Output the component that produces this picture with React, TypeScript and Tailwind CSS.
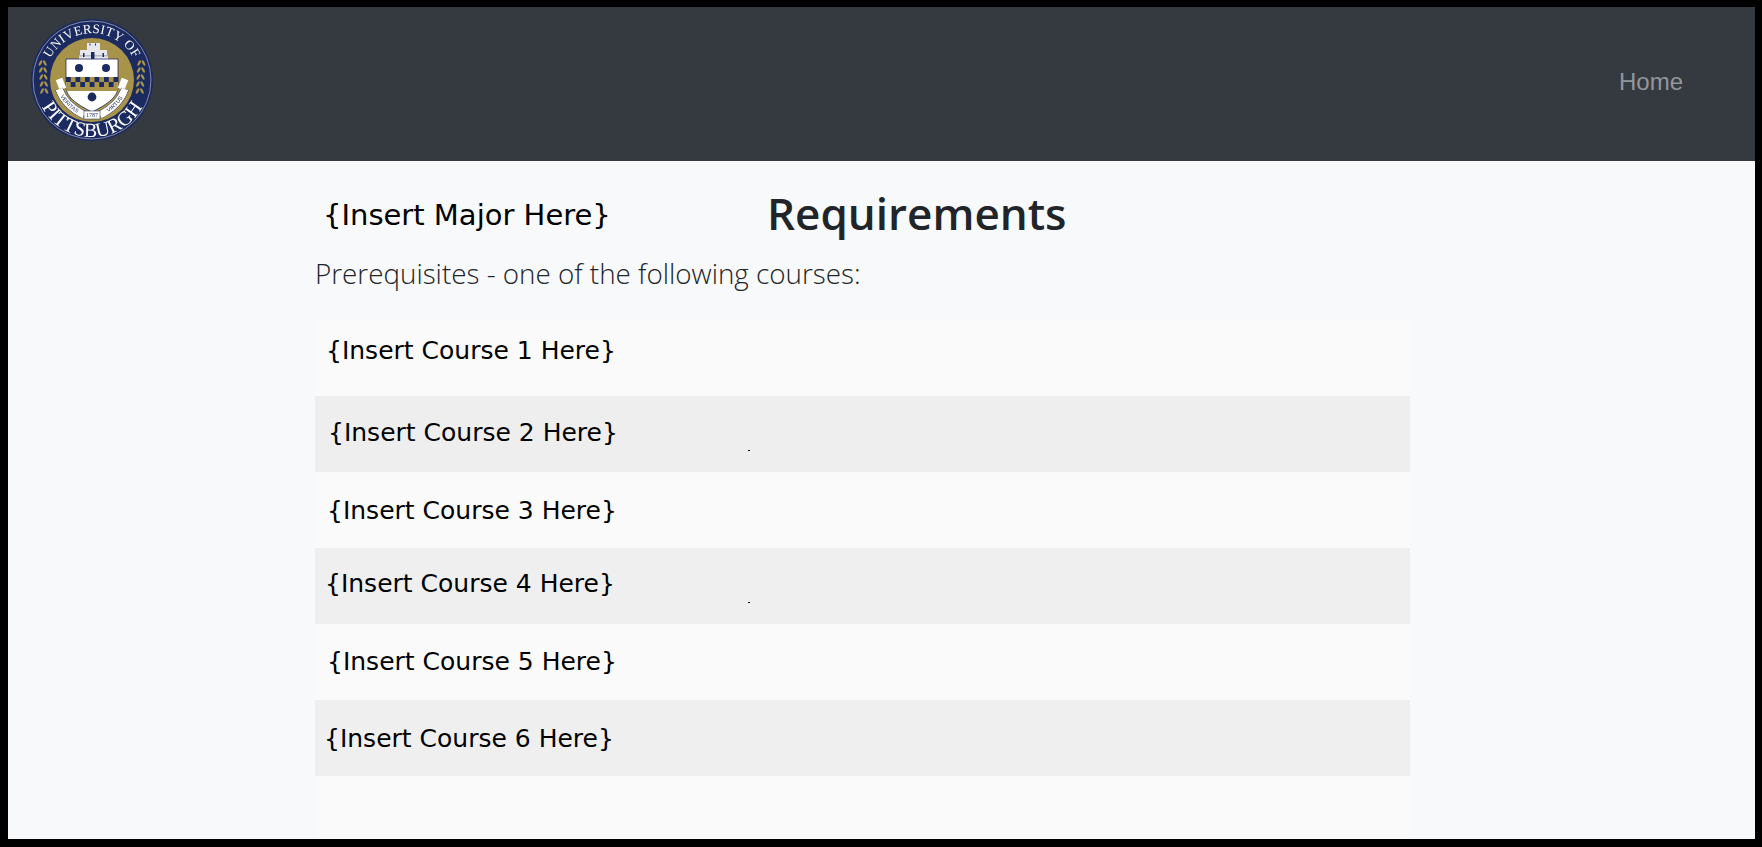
const rows = [
  { label: "{Insert Course 1 Here}", cls: "h-[76px] pl-[11px] pb-[14px] flex items-center" },
  { label: "{Insert Course 2 Here}", cls: "h-[76px] pl-[13px] pb-[2px] flex items-center bg-[#eeeeee] relative", dot: true },
  { label: "{Insert Course 3 Here}", cls: "h-[76px] pl-[12px] pt-[2px] flex items-center" },
  { label: "{Insert Course 4 Here}", cls: "h-[76px] pl-[10px] pb-[4px] flex items-center bg-[#efefef] relative", dot: true },
  { label: "{Insert Course 5 Here}", cls: "h-[76px] pl-[12px] flex items-center" },
  { label: "{Insert Course 6 Here}", cls: "h-[76px] pl-[9px] pt-[2px] flex items-center bg-[#efefef]" },
];

const navy = "#1c2b5f";
const gold = "#a8934a";

function Laurel({ flip }: { flip?: boolean }) {
  const leaves = [-17, -10, -3, 4, 11];
  return (
    <g transform={flip ? "scale(-1 1)" : undefined} fill={gold}>
      {leaves.map((y, i) => (
        <g key={y}>
          <ellipse cx={-51.5 + i * 0.4} cy={y} rx="1.3" ry="3" transform={`rotate(28 ${-51.5 + i * 0.4} ${y})`} />
          <ellipse cx={-47.2 + i * 0.4} cy={y} rx="1.3" ry="3" transform={`rotate(-28 ${-47.2 + i * 0.4} ${y})`} />
        </g>
      ))}
    </g>
  );
}

function Logo() {
  const checks = [];
  for (let r = 0; r < 2; r++) {
    for (let c = 0; c < 11; c++) {
      if ((r + c) % 2 === 0) {
        checks.push(<rect key={r + "-" + c} x={-26 + c * 4.75} y={-3 + r * 5} width="4.75" height="5" fill={navy} />);
      }
    }
  }
  return (
    <svg width="122" height="122" viewBox="-61 -61 122 122" className="block blur-[0.3px]">
      <defs>
        <path id="logoTop" d="M -47 0 A 47 47 0 0 1 47 0" />
        <path id="logoBottom" d="M -57 0 A 57 57 0 0 0 57 0" />
        <path id="ribbonL" d="M -33 9 C -29 20 -20 29 -8 35" />
        <path id="ribbonR" d="M 8 35 C 20 29 29 20 33 9" />
      </defs>
      <circle r="61" fill={navy} />
      <circle r="59" fill="none" stroke="#aeb3c6" strokeWidth="0.7" />
      <circle r="42" fill={gold} />
      <text fill="#ffffff" fontFamily="'Liberation Serif', serif" fontSize="13" letterSpacing="0.4">
        <textPath href="#logoTop" startOffset="50%" textAnchor="middle">UNIVERSITY OF</textPath>
      </text>
      <text fill="#ffffff" fontFamily="'Liberation Serif', serif" fontSize="20">
        <textPath href="#logoBottom" startOffset="50%" textAnchor="middle">PITTSBURGH</textPath>
      </text>
      <Laurel />
      <Laurel flip />
      <g fill="#e6e8ee">
        <rect x="-12" y="-30" width="7" height="10" />
        <rect x="8" y="-30" width="7" height="10" />
        <rect x="-5" y="-37" width="13" height="17" />
        <rect x="-13" y="-25" width="29" height="5" />
      </g>
      <g fill={navy}>
        <rect x="-1" y="-28" width="3.5" height="8" />
        <rect x="-9" y="-27" width="1.5" height="4" />
        <rect x="10.5" y="-27" width="1.5" height="4" />
        <rect x="-2.5" y="-36.5" width="1" height="2" />
        <rect x="3" y="-36.5" width="1" height="2" />
        <rect x="-13" y="-24.4" width="29" height="0.6" opacity="0.6" />
      </g>
      <path d="M -26 -21 H 26 V 7 C 26 18 12 26 0 32 C -12 26 -26 18 -26 7 Z" fill="#ffffff" stroke={navy} strokeWidth="0.8" />
      <circle cx="-13" cy="-12" r="4" fill={navy} />
      <circle cx="14" cy="-12" r="4" fill={navy} />
      <rect x="-25.6" y="-3" width="51.2" height="14" fill={gold} />
      {checks}
      <circle cx="0" cy="17" r="4.4" fill={navy} />
      <path d="M -33 -1 L -29 9 M 33 -1 L 29 9" stroke="#ffffff" strokeWidth="7" fill="none" />
      <path d="M -33 9 C -29 20 -20 29 -8 35 M 8 35 C 20 29 29 20 33 9" stroke={navy} strokeWidth="8" fill="none" />
      <path d="M -33 9 C -29 20 -20 29 -8 35 M 8 35 C 20 29 29 20 33 9" stroke="#ffffff" strokeWidth="7" fill="none" />
      <text fill={navy} fontFamily="'Liberation Sans', sans-serif" fontSize="5.5" dy="1.9">
        <textPath href="#ribbonL" startOffset="50%" textAnchor="middle">VERITAS</textPath>
      </text>
      <text fill={navy} fontFamily="'Liberation Sans', sans-serif" fontSize="5.5" dy="1.9">
        <textPath href="#ribbonR" startOffset="50%" textAnchor="middle">VIRTUS</textPath>
      </text>
      <rect x="-8" y="31" width="16" height="8" fill="#ffffff" stroke={navy} strokeWidth="0.5" />
      <text x="0" y="37.2" textAnchor="middle" fontSize="6" fill={navy} fontFamily="'Liberation Serif', serif">1787</text>
    </svg>
  );
}

export default function App() {
  return (
    <div className="h-screen bg-black pt-[7px] pl-[8px] pr-[7px] pb-[8px]">
      <div className="h-full flex flex-col bg-[#f8f9fa]">
        <nav className="h-[154px] flex-none bg-[#343a40] flex justify-between pl-[23px] pr-[72px]">
          <div className="pt-[12px]">
            <Logo />
          </div>
          <a className="mt-[57px] text-[24px] leading-[36px] text-[#93979a] font-['Liberation_Sans',sans-serif]">Home</a>
        </nav>
        <main className="flex-1 ml-[307px] w-[1095px] flex flex-col">
          <div className="h-[159px] flex-none">
            <div className="flex items-center h-[94px] pl-[8px] pt-[10px]">
              <h2 className="w-[444px] flex-none mt-[4px] text-[29px] leading-none text-black font-['DejaVu_Sans',sans-serif]">{"{Insert Major Here}"}</h2>
              <h1 className="text-[44px] leading-none font-semibold text-[#212529] font-['Open_Sans',sans-serif]">Requirements</h1>
            </div>
            <p className="-mt-[2px] text-[27.8px] leading-[40px] font-light text-[#212529] font-['Open_Sans',sans-serif]">Prerequisites - one of the following courses:</p>
          </div>
          <div className="flex-1 bg-[#fafafa] font-['DejaVu_Sans',sans-serif] text-[25px] text-black">
            {rows.map((r) => (
              <div key={r.label} className={r.cls}>
                <span>{r.label}</span>
                {r.dot ? <span className="absolute left-[433px] top-[54px] w-[2px] h-[1px] bg-black" /> : null}
              </div>
            ))}
          </div>
        </main>
      </div>
    </div>
  );
}
